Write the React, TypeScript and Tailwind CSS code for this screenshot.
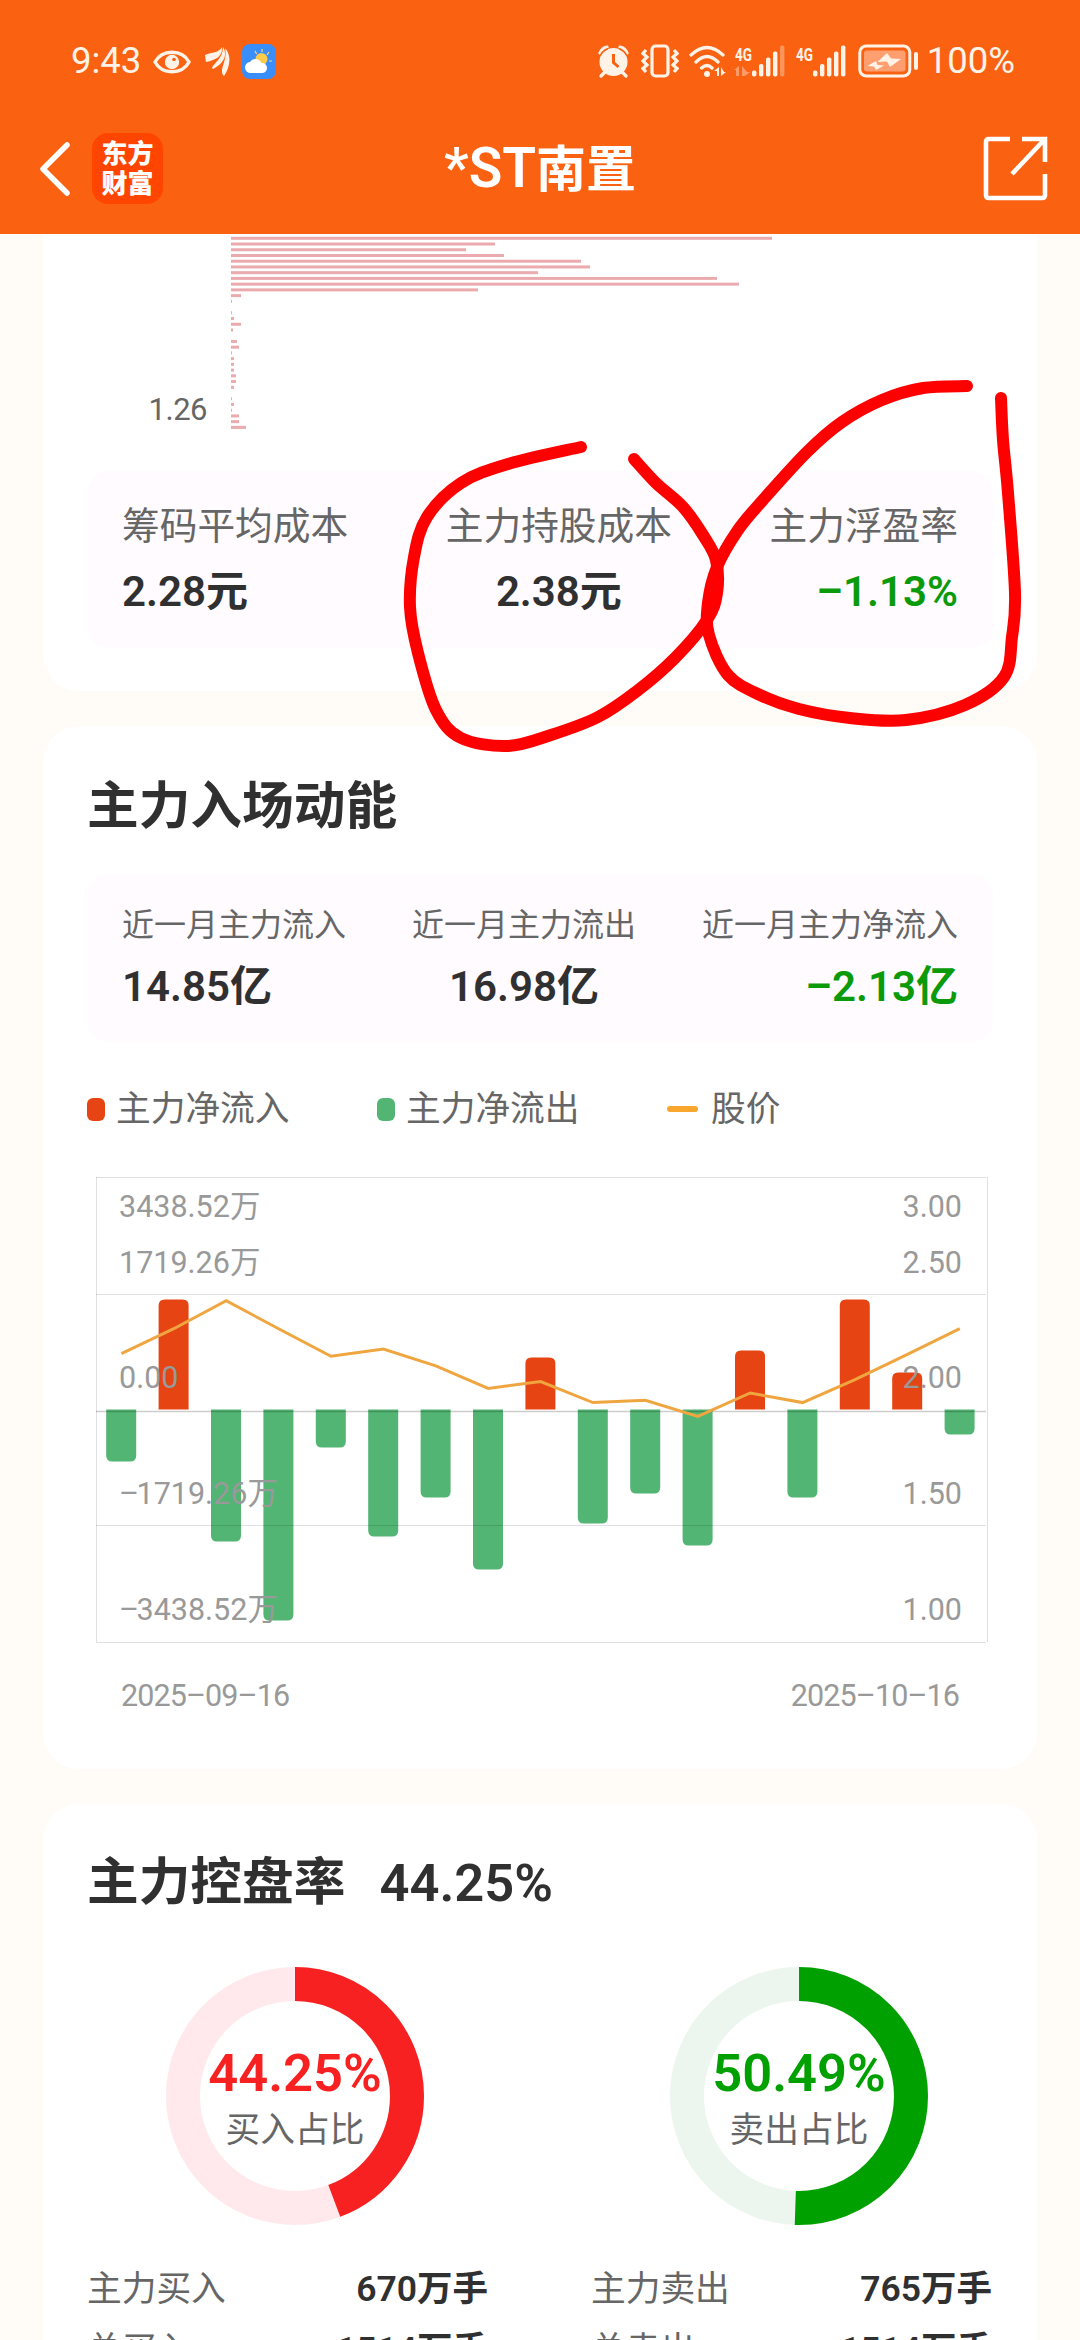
import React from "react";

// share of chips at each price level, as bar lengths
const chips = [
  541, 264, 235, 273, 350, 359, 307, 486, 508, 247, 10, 1, 0, 1, 3, 10, 2, 0, 6, 8, 1, 3, 3, 3, 5, 5, 3, 0, 1, 3, 1, 8,
  8, 15,
];

// main force net flow per day, positive is inflow
const flows = [-52, 110, -132, -211, -38, -127, -88, -160, 52, -114, -84, -136, 59, -88, 110, 37, -25];
const prices = [
  176.6, 151.7, 123.8, 151.7, 179.3, 172, 188.8, 211.4, 204.5, 225.6, 223.3, 239.4, 216, 225.6, 202.6, 177.4, 151.7,
];

const axis = [
  { y: 28.5, left: "3438.52万", right: "3.00" },
  { y: 84.5, left: "1719.26万", right: "2.50" },
  { y: 199.5, left: "0.00", right: "2.00" },
  { y: 315.5, left: "1719.26万", right: "1.50", negative: true },
  { y: 431.5, left: "3438.52万", right: "1.00", negative: true },
];

const costStats = [
  { label: "筹码平均成本", value: "2.28元" },
  { label: "主力持股成本", value: "2.38元" },
  { label: "主力浮盈率", value: "–1.13%", down: true },
];

const flowStats = [
  { label: "近一月主力流入", value: "14.85亿" },
  { label: "近一月主力流出", value: "16.98亿" },
  { label: "近一月主力净流入", value: "–2.13亿", down: true },
];

const circleOne = [
  [581, 447], [508, 464], [461, 483], [427, 517], [414, 557], [410, 607], [418, 653], [436, 710], [461, 738],
  [508, 746], [551, 735], [598, 717], [637, 691], [675, 658], [707, 620], [717, 593], [716, 560], [703, 535],
  [683, 507], [656, 483], [634, 459],
];
const circleTwo = [
  [967, 386], [923, 388], [882, 400], [842, 422], [807, 452], [763, 500], [738, 530], [717, 567], [708, 603],
  [709, 635], [728, 675], [760, 695], [799, 709], [850, 718], [906, 720], [965, 705], [1004, 677], [1012, 637],
  [1015, 593], [1008, 493], [1003, 440], [1001, 398],
];

// runs a smooth curve through the points
const smooth = (pts: number[][]) => {
  let d = `M${pts[0][0]} ${pts[0][1]}`;
  for (let i = 0; i < pts.length - 1; i++) {
    const p0 = pts[i - 1] || pts[i];
    const p1 = pts[i];
    const p2 = pts[i + 1];
    const p3 = pts[i + 2] || p2;
    d += `C${p1[0] + (p2[0] - p0[0]) / 6} ${p1[1] + (p2[1] - p0[1]) / 6} ${p2[0] - (p3[0] - p1[0]) / 6} ${p2[1] - (p3[1] - p1[1]) / 6} ${p2[0]} ${p2[1]}`;
  }
  return d;
};

function Signal({ weak }: { weak?: boolean }) {
  return (
    <svg width="53" height="34" viewBox="0 0 53 34" fill="#fff3e8" className="overflow-visible">
      <text x="1" y="16.500" fontSize="19" fontWeight="700" textLength="17" lengthAdjust="spacingAndGlyphs">4G</text>
      {weak && (
        <g opacity="0.4">
          <path d="M5 22v10h-3v-6H0zM8 22v10h3l5-4h-3z" />
        </g>
      )}
      {[6, 12.5, 19, 25, 31].map((h, i) => (
        <rect key={i} x={18 + i * 7} y={32.5 - h} width="4.4" height={h} rx="1.8" opacity={weak && i == 4 ? 0.35 : 1} />
      ))}
    </svg>
  );
}

function StatusBar() {
  return (
    <div className="flex h-[122px] items-center pl-[71px] pr-[65px] text-[#fff3e8]">
      <span className="w-[82px] text-[36.5px] leading-none">9:43</span>
      <svg width="38" height="28" viewBox="0 0 38 28" className="mt-px">
        <path d="M2 14C9 1 29 1 36 14C29 27 9 27 2 14Z" fill="none" stroke="currentColor" strokeWidth="3.4" />
        <circle cx="19" cy="14" r="7.2" fill="currentColor" />
        <circle cx="21" cy="11.5" r="1.8" fill="#fa6212" />
      </svg>
      <svg width="25" height="29" viewBox="0 0 25 29" className="ml-[14px]" fill="currentColor">
        <path d="M0 8C7 5 14 6 17 0C18 9 11 13 1 15Z" />
        <path d="M7 21C9 15 18 12 18 0C24 10 16 18 8 22Z" />
        <path d="M18 28C14 22 23 13 20 1C27 9 25 20 19 29Z" />
      </svg>
      <svg width="35" height="35" viewBox="0 0 35 35" className="ml-3">
        <rect width="34" height="35" rx="8" fill="#3a8efa" />
        <path d="M13 7l1.6 3M20 5v3M27 8l-2 3M30 17h-3" stroke="#ffd873" strokeWidth="1.2" />
        <circle cx="19.500" cy="15" r="6" fill="#ffcb4b" />
        <path d="M9 29a5.500 5.500 0 0 1-1-11a6.500 6.500 0 0 1 11.500 1a5 5 0 0 1 1 10Z" fill="#fff" />
      </svg>
      <div className="ml-auto flex items-center">
        <svg width="31" height="33" viewBox="0 0 31 33" fill="currentColor">
          <circle cx="15.500" cy="17" r="14" />
          <path d="M2 8Q4 3 9 2M29 8Q27 3 22 2M7 27l-4 4M24 27l4 4" fill="none" stroke="currentColor" strokeWidth="3.2" strokeLinecap="round" />
          <path d="M2.500 10Q5 5.500 10 3.500M28.500 10Q26 5.500 21 3.500" fill="none" stroke="#fa6212" strokeWidth="1.4" />
          <path d="M15.500 9v8.500l5 4.500" fill="none" stroke="#fa6212" strokeWidth="3" />
        </svg>
        <svg width="38" height="34" viewBox="0 0 38 34" className="ml-3" fill="none" stroke="currentColor" strokeWidth="3.2">
          <rect x="11" y="2" width="16" height="30" rx="3.500" />
          <path d="M5 6L2 9.500L6 13L2 17L6 21L2 24.500L5 28M33 6l3 3.500L32 13l4 4l-4 4l4 3.500l-3 3.500" />
        </svg>
        <svg width="38" height="33" viewBox="0 0 38 33" className="ml-[10px]" fill="none" stroke="currentColor" strokeWidth="3.2" strokeLinecap="round">
          <path d="M2 10Q18 -5 34 10M7 17Q18 6 29 17M12.500 23Q18 18 23 23" />
          <circle cx="18" cy="29" r="3" fill="currentColor" stroke="none" />
          <path d="M30 22v9h-2v-5h-3zM32 22v9l5-4h-2z" fill="currentColor" stroke="none" />
        </svg>
        <div className="ml-[7px] flex gap-2">
          <Signal weak />
          <Signal />
        </div>
        <svg width="61" height="34" viewBox="0 0 61 34" className="ml-[10px]">
          <rect x="1.800" y="2" width="50" height="30" rx="6.500" fill="none" stroke="currentColor" strokeWidth="3" />
          <rect x="6" y="6.500" width="41.500" height="21" rx="3" fill="#ff9f70" />
          <path d="M29 9L19.500 18L29 17.500L32 23L43 15L33 14.500ZM18 17L9.500 22L16 22.500L18 26L26 21.500L19.500 21Z" fill="currentColor" />
          <rect x="56" y="8" width="4" height="18" rx="2" fill="currentColor" />
        </svg>
        <span className="ml-[8px] text-[36.5px] leading-none">100%</span>
      </div>
    </div>
  );
}

function NavBar() {
  return (
    <div className="flex h-[93px] items-center pl-[39px] pr-[32px] text-white">
      <svg width="31" height="54" viewBox="0 0 31 54" fill="none" stroke="currentColor" strokeWidth="5.500" strokeLinecap="round" strokeLinejoin="round">
        <path d="M28 3L4 27L28 51" />
      </svg>
      <div className="ml-[22px] flex h-[71px] w-[71px] flex-col items-center justify-center gap-1 rounded-2xl bg-[#ff4500] text-[26px] leading-[26px] font-black">
        <span>东方</span>
        <span>财富</span>
      </div>
      <h1 className="flex flex-1 items-baseline justify-center pr-[66px] text-[50px] leading-[60px] font-bold">
        <span className="text-[55px] font-semibold">*ST</span>
        <span>南置</span>
      </h1>
      <svg width="65" height="65" viewBox="0 0 65 65" fill="none" stroke="currentColor" strokeWidth="4.600">
        <path d="M27 3H6Q3 3 3 6V59Q3 62 6 62H59Q62 62 62 59V38M39 3H62V26M62 3L29 38" />
      </svg>
    </div>
  );
}

function Stats({ items, small }: { items: { label: string; value: string; down?: boolean }[]; small?: boolean }) {
  return (
    <div className={"flex items-center justify-between rounded-[22px] bg-[#fffbff] px-[35px] " + (small ? "h-[168px]" : "h-[177px]")}>
      {items.map((item, i) => (
        <div key={item.label} className={"flex flex-col " + (i == 0 ? "items-start" : i == 1 ? "items-center" : "items-end")}>
          <span className={"text-[#666] " + (small ? "text-[32px] leading-[58px]" : "text-[37.7px] leading-[64px]")}>{item.label}</span>
          <span className={"text-[42px] font-semibold " + (small ? "leading-[66px] " : "leading-[68px] ") + (item.down ? "text-[#0a9a0a]" : "text-[#303030]")}>{item.value}</span>
        </div>
      ))}
    </div>
  );
}

function FlowChart() {
  return (
    <svg width="906" height="468" viewBox="0 0 906 468" className="mt-12 block">
      {flows.map((v, i) => {
        const x = 19.2 + i * 52.4;
        const h = Math.abs(v);
        return v > 0 ? (
          <path key={i} fill="#e64412" d={`M${x} 232.500V${238.5 - h}q0-6 6-6h18q6 0 6 6V232.500z`} />
        ) : (
          <path key={i} fill="#52b573" d={`M${x} 232.500V${226.5 + h}q0 6 6 6h18q6 0 6-6V232.500z`} />
        );
      })}
      <g stroke="#000" strokeOpacity="0.12">
        <path d="M9 .5H899M9 117.500H899M9 348.500H899M9 465.500H899M9.500 0V465M900.500 0V465" />
        <path d="M9 234.500H899" strokeOpacity="0.2" strokeWidth="1.500" />
      </g>
      <polyline points={prices.map((p, i) => `${34.4 + i * 52.4},${p}`).join(" ")} fill="none" stroke="#f0a640" strokeWidth="3" />
      {axis.map(a => (
        <g key={a.y} fill="#999" fontSize="30.500">
          <text x="32" y={a.y + 11}>
            {a.negative && <tspan letterSpacing="-2.500">–</tspan>}
            {a.left}
          </text>
          <text x="875" y={a.y + 11} textAnchor="end">{a.right}</text>
        </g>
      ))}
    </svg>
  );
}

type DonutProps = { percent: number; label: string; color: string; track: string; rows: string[][] };

function Donut({ percent, label, color, track, rows }: DonutProps) {
  const len = 2 * Math.PI * 112;
  return (
    <div className="w-[401px]">
      <div className="ml-[79px] grid h-[258px] w-[258px] place-items-center">
        <svg width="258" height="258" viewBox="0 0 258 258" className="col-start-1 row-start-1" fill="none" strokeWidth="34">
          <circle cx="129" cy="129" r="112" stroke={track} />
          <circle cx="129" cy="129" r="112" stroke={color} strokeDasharray={`${(len * percent) / 100} ${len}`} transform="rotate(-90 129 129)" />
        </svg>
        <div className="col-start-1 row-start-1 flex flex-col items-center pt-[11px]">
          <span className="text-[52.5px] leading-[56px] font-semibold" style={{ color }}>{percent}%</span>
          <span className="text-[34.7px] leading-[58px] text-[#666]">{label}</span>
        </div>
      </div>
      <div className="mt-[34px]">
        {rows.map(([name, value]) => (
          <div key={name} className="flex h-[61px] items-center justify-between text-[34.7px]">
            <span className="text-[#666]">{name}</span>
            <span className="text-[35.5px] font-semibold text-[#303030]">{value}</span>
          </div>
        ))}
      </div>
    </div>
  );
}

export default function App() {
  return (
    <div className="relative h-[2340px] w-[1080px] overflow-hidden bg-[#fffcf7] font-[Roboto,'Noto_Sans_CJK_SC',sans-serif]">
      <header className="h-[234px] bg-[#fa6212]">
        <StatusBar />
        <NavBar />
      </header>

      <main className="flex flex-col gap-[35px] px-[43px]">
        <section className="h-[457px] rounded-b-[36px] bg-white px-[44px]">
          <div className="flex h-[237px]">
            <div className="w-[144px] pt-[160px] pr-6 text-right text-[31px] leading-8 tracking-[-0.5px] text-[#666]">1.26</div>
            <svg width="600" height="237" fill="#ebabae">
              {chips.map((w, i) => (
                <rect key={i} x="0" y={2.8 + i * 5.73} width={w} height="3" />
              ))}
            </svg>
          </div>
          <Stats items={costStats} />
        </section>

        <section className="h-[1043px] rounded-[36px] bg-white px-[44px] pt-[51px]">
          <h2 className="mb-[37px] text-[51.7px] leading-[60px] font-bold text-[#303030]">主力入场动能</h2>
          <Stats items={flowStats} small />
          <div className="mt-[47px] grid h-10 grid-cols-[290px_290px_1fr] text-[34.7px] leading-10 text-[#666]">
            <div className="flex items-center gap-[11px]">
              <i className="h-[23px] w-[18px] rounded-[6px] bg-[#e64412]" />主力净流入
            </div>
            <div className="flex items-center gap-[11px]">
              <i className="h-[23px] w-[18px] rounded-[6px] bg-[#52b573]" />主力净流出
            </div>
            <div className="flex items-center gap-[13px]">
              <i className="h-[6px] w-[31px] rounded-full bg-[#f9a62e]" />股价
            </div>
          </div>
          <FlowChart />
          <div className="mt-[31px] flex h-10 justify-between px-[34px] text-[30.5px] leading-10 tracking-[-0.9px] text-[#999]">
            <span>2025–09–16</span>
            <span>2025–10–16</span>
          </div>
        </section>

        <section className="h-[600px] shrink-0 rounded-t-[36px] bg-white px-[44px] pt-[49px]">
          <h2 className="mb-[54px] flex gap-[34px] text-[51.7px] leading-[60px] font-bold text-[#303030]">
            <span>主力控盘率</span>
            <span className="text-[52.5px] font-semibold">44.25%</span>
          </h2>
          <div className="flex gap-[103px]">
            <Donut percent={44.25} label="买入占比" color="#f72121" track="#ffe9ec" rows={[["主力买入", "670万手"], ["总买入", "1514万手"]]} />
            <Donut percent={50.49} label="卖出占比" color="#00a000" track="#edf6ee" rows={[["主力卖出", "765万手"], ["总卖出", "1514万手"]]} />
          </div>
        </section>
      </main>

      {/* hand drawn marks over the cost figures */}
      <svg className="absolute top-0 left-0" width="1080" height="800" fill="none" stroke="#fe0000" strokeWidth="12" strokeLinecap="round" strokeLinejoin="round">
        <path d={smooth(circleOne)} />
        <path d={smooth(circleTwo)} />
      </svg>
    </div>
  );
}
